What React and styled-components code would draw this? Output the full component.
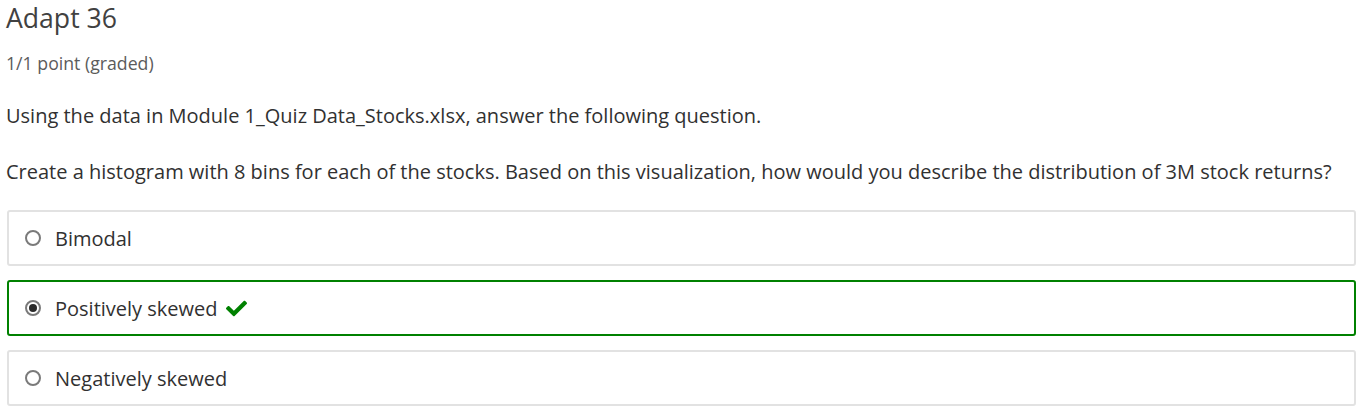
import styled, { createGlobalStyle } from "styled-components";
import { FaCheck } from "react-icons/fa";

const GlobalStyle = createGlobalStyle`
  body {
    margin: 0;
    background: #fff;
    font-family: "Open Sans", sans-serif;
  }
`;

const Problem = styled.div`
  padding: 0 7px 0 6px;
  color: #313131;
`;

const Title = styled.h3`
  margin: 0;
  font-size: 26.6px;
  font-weight: 400;
  line-height: 36px;
  color: #414141;
`;

const Points = styled.div`
  margin-top: 15px;
  font-size: 17.7px;
  line-height: 24px;
  color: #5b5b5b;
`;

const Para = styled.p`
  margin: 0;
  margin-top: ${({ $top }) => $top}px;
  font-size: 20px;
  line-height: 28px;
  color: #313131;
`;

const Choices = styled.div`
  margin-top: 24px;
  margin-left: 1px;
  display: flex;
  flex-direction: column;
  gap: 14px;
`;

const Choice = styled.label`
  display: flex;
  align-items: center;
  gap: 14px;
  height: 56px;
  box-sizing: border-box;
  padding: 0 0 0 16px;
  border: 2px solid ${({ $correct }) => ($correct ? "#008100" : "#e2e2e2")};
  border-radius: 3px;
  font-size: 20px;
  color: #313131;
`;

const Radio = styled.span`
  width: 16px;
  height: 16px;
  box-sizing: border-box;
  border-radius: 50%;
  border: 2px solid #7a7a7a;
  background: #fff;
  display: flex;
  align-items: center;
  justify-content: center;

  &::after {
    content: "";
    display: ${({ $checked }) => ($checked ? "block" : "none")};
    width: 8px;
    height: 8px;
    border-radius: 50%;
    background: #2a2a2a;
  }
`;

const CheckIcon = styled(FaCheck)`
  margin-left: -6px;
  color: #008100;
`;

const options = [
  { label: "Bimodal" },
  { label: "Positively skewed", checked: true },
  { label: "Negatively skewed" },
];

export default function App() {
  return (
    <>
      <GlobalStyle />
      <Problem>
        <Title>Adapt 36</Title>
        <Points>1/1 point (graded)</Points>
        <Para $top={27}>
          Using the data in Module 1_Quiz Data_Stocks.xlsx, answer the following question.
        </Para>
        <Para $top={28}>
          Create a histogram with 8 bins for each of the stocks. Based on this visualization, how would you describe the distribution of 3M stock returns?
        </Para>
        <Choices>
          {options.map((o) => (
            <Choice key={o.label} $correct={o.checked}>
              <Radio $checked={o.checked} />
              {o.label}
              {o.checked && <CheckIcon size={21} />}
            </Choice>
          ))}
        </Choices>
      </Problem>
    </>
  );
}
